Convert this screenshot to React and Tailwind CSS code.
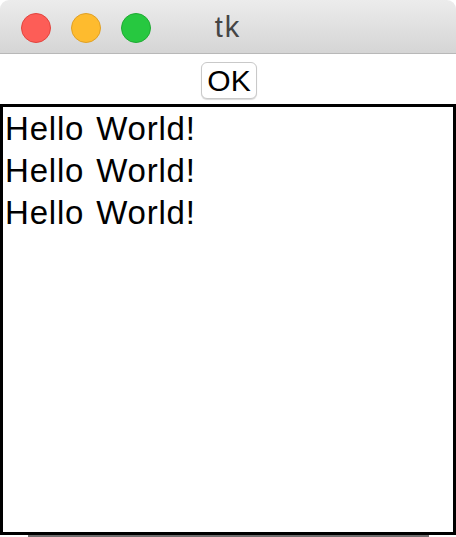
import React from "react";

const lines = ["Hello World!", "Hello World!", "Hello World!"];

const App = () => {
  return (
    <div className="w-[456px] h-[537px] bg-white overflow-hidden flex flex-col font-['Liberation_Sans',Arial,sans-serif]">
      {/* Title bar */}
      <div className="relative h-[54px] shrink-0 rounded-t-[9px] bg-gradient-to-b from-[#ececec] to-[#d5d5d5] border-b border-[#b8b8b8] flex items-center">
        <div className="flex items-center gap-[20px] pl-[21px] pt-[2px]">
          <span className="w-[30px] h-[30px] rounded-full bg-[#fd5d57] border border-[#e2443e]" />
          <span className="w-[30px] h-[30px] rounded-full bg-[#febb2e] border border-[#e0a025]" />
          <span className="w-[30px] h-[30px] rounded-full bg-[#27c840] border border-[#1fab33]" />
        </div>
        <span className="absolute left-0 right-0 top-[11px] text-center text-[29px] leading-[32px] tracking-[2px] text-[#454545]">
          tk
        </span>
      </div>

      {/* Button row */}
      <div className="h-[50px] shrink-0 flex justify-center pt-[8px]">
        <button className="h-[37px] w-[56px] ml-[2px] rounded-[6px] border border-[#c9c9c9] bg-white shadow-[0_1px_1px_rgba(0,0,0,0.15)] text-[30px] leading-[34px] text-black flex items-center justify-center">
          OK
        </button>
      </div>

      {/* Text widget */}
      <div className="h-[431px] shrink-0 border-[3px] border-black bg-white pl-[2px] pt-[1px]">
        {lines.map((line, i) => (
          <p key={i} className="text-[33px] leading-[42px] text-black tracking-[0.8px] [word-spacing:2px]">
            {line}
          </p>
        ))}
      </div>

      {/* bottom strip */}
      <div className="h-[2px] shrink-0 flex justify-center">
        <div className="w-[401px] bg-[#6e6e6e]" />
      </div>
    </div>
  );
};

export default App;
